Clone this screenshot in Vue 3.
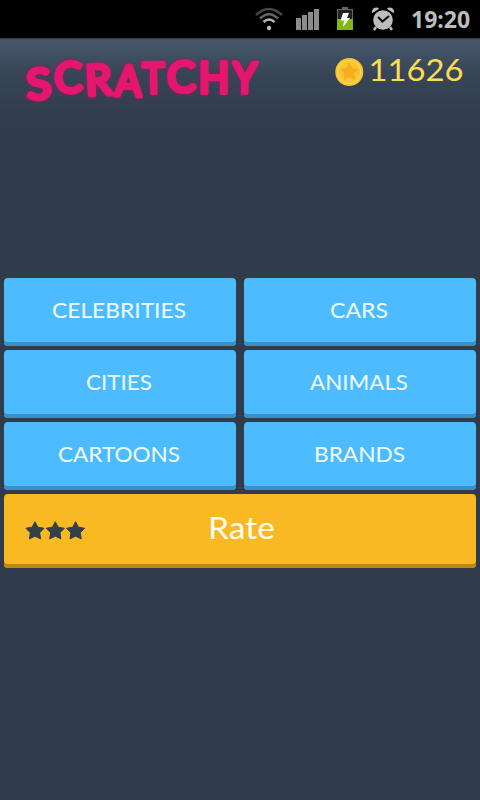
<template>
  <div class="screen">
    <div class="status">
      <svg class="icons" width="145" height="38" viewBox="0 0 145 38">
        <g fill="none" stroke-width="2.6">
          <path stroke="#484848" d="M1 15 Q14 3 27 15" />
          <path stroke="#666" d="M5 18.500 Q14 10 23 18.500" />
          <path stroke="#b5b5b5" d="M8.500 22 Q14 17 19.500 22" />
        </g>
        <circle cx="14" cy="28" r="2.200" fill="#bbb" />
        <g fill="#8c8c8c">
          <rect x="41" y="18" width="5" height="12" />
          <rect x="47" y="15" width="5" height="15" />
          <rect x="53" y="12" width="5" height="18" />
          <rect x="59" y="9" width="5" height="21" />
        </g>
        <rect x="87" y="7" width="6" height="3" fill="#666" />
        <rect x="82.500" y="9.500" width="15" height="20" fill="#222" stroke="#666" />
        <rect x="82" y="19" width="16" height="11" fill="#82b812" />
        <path fill="#fff" d="M88 13 L94 13 L92 18 L95 18 L88 27 L89 20.500 L85.500 20.500 Z" />
        <g fill="#bdbdbd">
          <circle cx="128" cy="20" r="9.800" />
          <path d="M117.500 12 Q118 7.500 123 8.500 Z M138.500 12 Q138 7.500 133 8.500 Z" stroke="#bdbdbd" stroke-width="1.500" stroke-linejoin="round" />
          <path d="M121 27 L119 30 M135 27 L137 30" stroke="#bdbdbd" stroke-width="2.500" />
        </g>
        <path d="M123 17 L127.500 21.500 L134 16" fill="none" stroke="#111" stroke-width="2.200" />
      </svg>
      <span class="clock">19:20</span>
    </div>

    <div class="header">
      <svg class="logo" width="270" height="80" viewBox="0 38 270 80">
        <g class="glow">
          <text v-for="(l, i) in logo" :key="i" :transform="place(l)">{{ l.ch }}</text>
        </g>
        <g class="letters">
          <text v-for="(l, i) in logo" :key="i" :transform="place(l)">{{ l.ch }}</text>
        </g>
      </svg>
      <svg class="coins" width="150" height="60" viewBox="330 38 150 60">
        <circle cx="349.300" cy="72" r="14" fill="#f9c32e" />
        <circle cx="349.300" cy="72" r="11.500" fill="#fac52f" stroke="#fbd75c" stroke-width="1.200" />
        <path
          :d="star(349.3, 72.2, 8.8)"
          fill="#f5ad22"
          stroke="#f5ad22"
          stroke-linejoin="round"
        />
        <text x="368.500" y="81" textLength="95" lengthAdjust="spacingAndGlyphs">11626</text>
      </svg>
    </div>

    <div class="menu">
      <button v-for="item in categories" :key="item.name" class="category">
        <svg :width="item.width" height="30">
          <text x="0" y="22" :textLength="item.width" lengthAdjust="spacingAndGlyphs">{{ item.name }}</text>
        </svg>
      </button>
      <button class="rate">
        <svg class="stars" width="62" height="22" viewBox="0 0 62 22">
          <path v-for="n in 3" :key="n" :d="star(n * 20.3 - 10.3, 11.2, 9.5)" />
        </svg>
        <svg class="label" width="68" height="40">
          <text x="0" y="30" textLength="67" lengthAdjust="spacingAndGlyphs">Rate</text>
        </svg>
      </button>
    </div>
  </div>
</template>

<script setup>
const logo = [
  { ch: "S", x: 39.5, y: 98.8, r: -4, sx: 1.08 },
  { ch: "C", x: 68.5, y: 92.3, r: -2, sx: 0.98 },
  { ch: "R", x: 99, y: 94.8, r: -3, sx: 1 },
  { ch: "A", x: 127.5, y: 96, r: 2, sx: 0.92 },
  { ch: "T", x: 153.5, y: 93, r: -1, sx: 0.88 },
  { ch: "C", x: 181.5, y: 91.8, r: -2, sx: 1 },
  { ch: "H", x: 213.8, y: 93.3, r: 0, sx: 0.95 },
  { ch: "Y", x: 244.3, y: 92.8, r: 1, sx: 0.9 },
];

const place = (l) => `translate(${l.x} ${l.y}) rotate(${l.r}) scale(${l.sx} 1)`;

const categories = [
  { name: "CELEBRITIES", width: 134 },
  { name: "CARS", width: 58 },
  { name: "CITIES", width: 66 },
  { name: "ANIMALS", width: 98 },
  { name: "CARTOONS", width: 122 },
  { name: "BRANDS", width: 91 },
];

const star = (cx, cy, r) => {
  const points = [];
  for (let i = 0; i < 10; i++) {
    const radius = i % 2 ? r * 0.52 : r;
    const angle = (Math.PI / 5) * i - Math.PI / 2;
    points.push(`${cx + radius * Math.cos(angle)} ${cy + radius * Math.sin(angle)}`);
  }
  return `M${points.join("L")}Z`;
};
</script>

<style>
body {
  background: #303b4b;
}
</style>

<style scoped>
.screen {
  width: 480px;
  height: 800px;
  overflow: hidden;
  background: #303b4b;
  font-family: "Lato", sans-serif;
}
.status {
  height: 38px;
  background: #000;
  display: flex;
  justify-content: flex-end;
  align-items: center;
  padding-right: 10px;
}
.icons {
  margin-right: 11px;
}
.clock {
  width: 59px;
  color: #bdbdbd;
  font: bold 23px "Noto Sans", sans-serif;
  white-space: nowrap;
}
.header {
  height: 240px;
  display: flex;
  justify-content: space-between;
  background: linear-gradient(#2c3742 0, #46586b 2px, #435467 10px, #374557 35px, #303b4b 90px);
}
.logo text {
  font-size: 42px;
  text-anchor: middle;
}
.letters {
  fill: #e5166d;
  stroke: #e5166d;
  stroke-width: 4.2;
  stroke-linejoin: round;
}
.glow {
  fill: #8c1e55;
  stroke: #8c1e55;
  stroke-width: 6.5;
  stroke-linejoin: round;
  filter: blur(1px);
  opacity: 0.6;
}
.coins text {
  font-size: 30px;
  fill: #fbdc55;
}
.menu {
  display: grid;
  grid-template-columns: 1fr 1fr;
  gap: 4px 8px;
  padding: 0 4px;
}
button {
  display: flex;
  align-items: center;
  justify-content: center;
  border: 0;
  border-radius: 4px;
  font-family: inherit;
}
.category {
  height: 68px;
  padding: 0 2px 2px 0;
  background: #4cbbff;
  box-shadow: inset 0 -4px #398fc7;
}
.category svg {
  overflow: visible;
}
.category text {
  font-size: 22px;
  fill: #f0fdff;
}
.rate {
  grid-column: span 2;
  height: 74px;
  padding: 0 0 4px 21px;
  justify-content: flex-start;
  background: #f8b923;
  box-shadow: inset 0 -4px #bd8712;
}
.stars {
  fill: #353f4a;
  stroke: #353f4a;
  stroke-linejoin: round;
  margin-top: 3px;
}
.label {
  margin-left: 121px;
}
.label text {
  font-size: 30px;
  fill: #fffdf0;
}
</style>
